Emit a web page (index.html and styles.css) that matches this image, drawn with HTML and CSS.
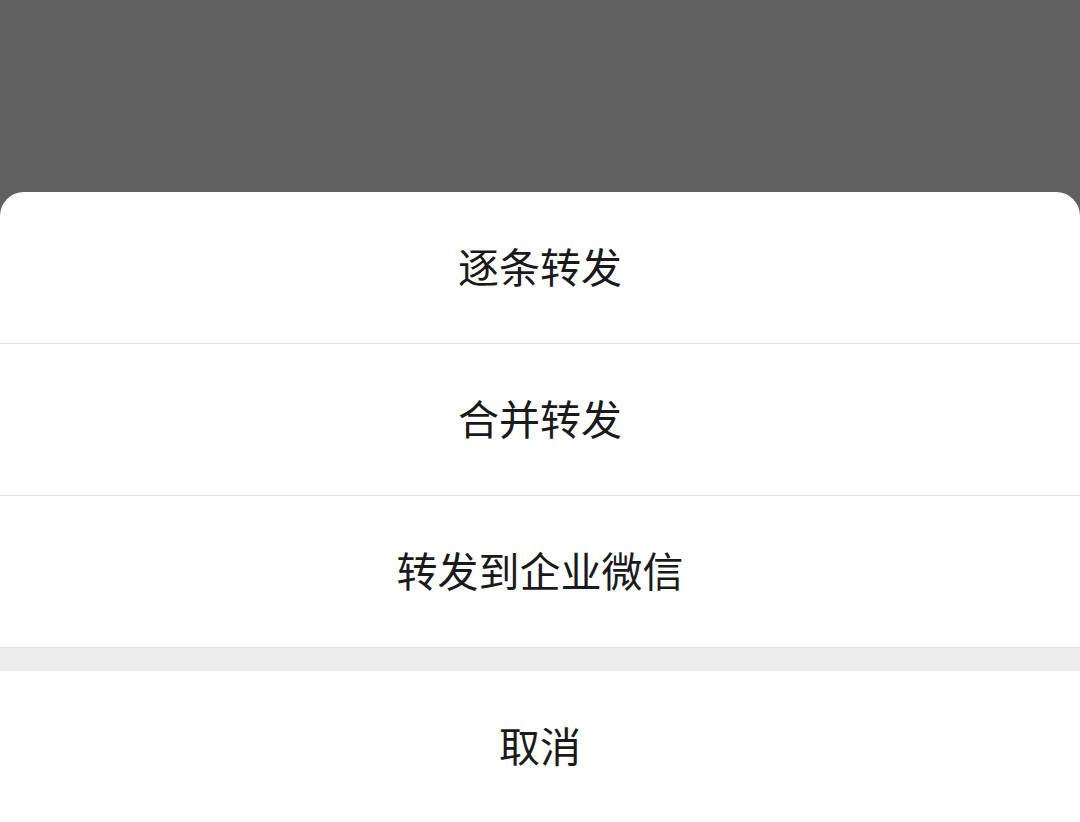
FILE: index.html
```html
<!DOCTYPE html>
<html>
	<head>
		<meta charset="UTF-8">
		<title></title>
		<link rel="stylesheet" href="styles.css">
	</head>
	<body>
		<div class="mask"></div>
		<div class="sheet">
			<ul class="menu">
				<li>逐条转发</li>
				<li>合并转发</li>
				<li>转发到企业微信</li>
			</ul>
			<div class="gap"></div>
			<div class="cancel">取消</div>
		</div>
	</body>
</html>
```
FILE: styles.css
```css
*{
	padding:0;
	margin:0;
	box-sizing: border-box;
}
ul,li{
	list-style: none;
}
html,body{
	height:100%;
	overflow: hidden;
	background: #606060;
}
body{
	display: flex;
	flex-direction: column;
	font-family: "Noto Sans CJK SC", "Noto Sans", sans-serif;
	color: #1a1a1a;
}
.mask{
	height:192px;
	flex-shrink: 0;
}
.sheet{
	flex:1;
	background: #fff;
	border-radius: 24px 24px 0 0;
	overflow: hidden;
}
.menu li{
	height:152px;
	padding-bottom:5px;
	border-bottom:1px solid #e3e3e3;
	display: flex;
	align-items: center;
	justify-content: center;
	font-size:41px;
}
.gap{
	height:23px;
	background: #ededed;
}
.cancel{
	height:151px;
	padding-bottom:5px;
	display: flex;
	align-items: center;
	justify-content: center;
	font-size:41px;
}
```
